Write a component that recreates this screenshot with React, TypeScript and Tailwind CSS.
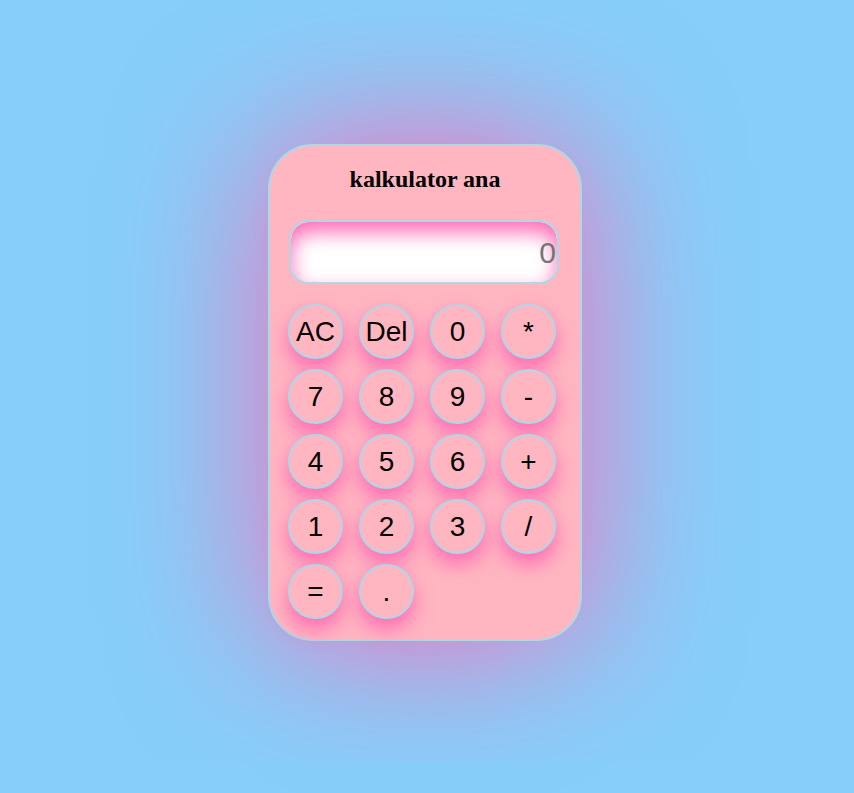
const rows: string[][] = [
  ['AC', 'Del', '0', '*'],
  ['7', '8', '9', '-'],
  ['4', '5', '6', '+'],
  ['1', '2', '3', '/'],
  ['=', '.'],
];

export default function App() {
  return (
    <div className="min-h-screen w-full bg-[#87cefa] flex justify-center pt-[144px] pr-[4px]">
      {/* Calculator card */}
      <div className="w-[314px] h-[497px] bg-[#ffb6c1] border-2 border-[#add8e6] rounded-[45px] shadow-[0_0_150px_#ff69b4] px-[19px] pt-[19px]">
        <h2 className="text-center text-[24px] leading-[28px] font-bold text-black font-['Liberation_Serif',serif]">
          kalkulator ana
        </h2>

        {/* Display */}
        <div className="mt-[27px] h-[64px] w-[270px] bg-white border-2 border-[#add8e6] rounded-[20px] shadow-[inset_0_10px_20px_#ff69b4] flex items-center justify-end pr-[1px]">
          <span className="text-[30px] text-[#757575] font-['Liberation_Sans',Arial,sans-serif]">0</span>
        </div>

        {/* Buttons */}
        <div className="mt-[20px] -ml-[1px] grid grid-cols-[repeat(4,55px)] gap-x-[16px] gap-y-[10px]">
          {rows.flat().map((label) => (
            <button
              key={label}
              className="w-[55px] h-[55px] rounded-full bg-[#ffb6c1] border-2 border-[#add8e6] shadow-[0_10px_20px_#ff69b4] text-[28px] text-black flex items-center justify-center font-['Liberation_Sans',Arial,sans-serif]"
            >
              {label}
            </button>
          ))}
        </div>
      </div>
    </div>
  );
}
